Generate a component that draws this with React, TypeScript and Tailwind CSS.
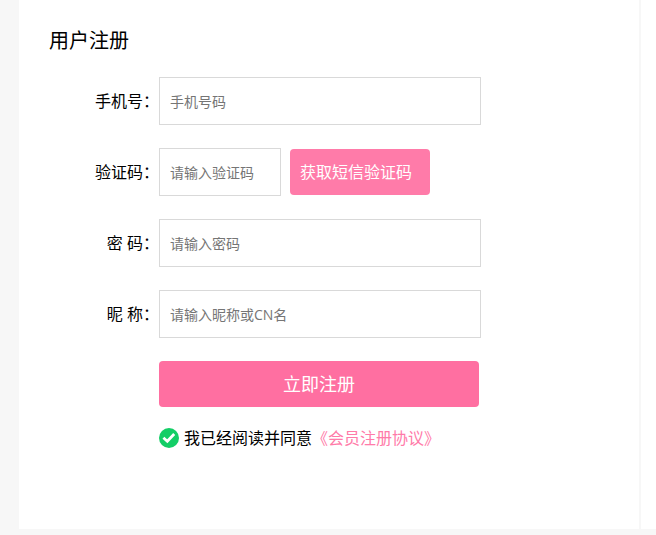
import { useState } from "react";

const labelClass = "w-[110px] shrink-0 text-right text-base";
const inputClass =
  "h-12 min-w-0 border border-[#d9d9d9] bg-white px-2.5 text-sm text-neutral-800 placeholder:text-[#757575] focus:border-[#ff6fa1] focus:outline-none";

export default function App() {
  const [agreed, setAgreed] = useState(true);

  return (
    <div className="flex min-h-screen gap-0.5 bg-[#f7f7f7] pb-1.5 pl-[19px] font-['Open_Sans','Noto_Sans_CJK_SC',sans-serif] text-black">
      <main className="min-w-0 flex-1 bg-white pt-6 pl-[30px]">
        <h1 className="text-xl leading-[34px]">用户注册</h1>

        <form
          className="mt-[19px] flex flex-col gap-[23px]"
          onSubmit={(e) => e.preventDefault()}
        >
          <div className="flex items-center">
            <label htmlFor="phone" className={labelClass}>
              手机号：
            </label>
            <input
              id="phone"
              type="tel"
              placeholder="手机号码"
              className={`${inputClass} w-[322px]`}
            />
          </div>

          <div className="flex items-center">
            <label htmlFor="code" className={labelClass}>
              验证码：
            </label>
            <input
              id="code"
              type="text"
              placeholder="请输入验证码"
              className={`${inputClass} w-[122px]`}
            />
            <button
              type="button"
              className="ml-[9px] h-[46px] w-[140px] rounded bg-[#ff7ba9] px-2.5 text-left text-base text-white"
            >
              获取短信验证码
            </button>
          </div>

          <div className="flex items-center">
            <label htmlFor="password" className={labelClass}>
              密 码：
            </label>
            <input
              id="password"
              type="password"
              placeholder="请输入密码"
              className={`${inputClass} w-[322px]`}
            />
          </div>

          <div className="flex items-center">
            <label htmlFor="nickname" className={labelClass}>
              昵 称：
            </label>
            <input
              id="nickname"
              type="text"
              placeholder="请输入昵称或CN名"
              className={`${inputClass} w-[322px]`}
            />
          </div>

          <div className="pl-[110px]">
            <button
              type="submit"
              className="h-[46px] w-[320px] rounded bg-[#ff6fa1] text-lg text-white"
            >
              立即注册
            </button>

            <div className="mt-[19px] flex items-center text-base">
              <span className="mr-[5px] grid size-5 shrink-0">
                <input
                  id="agree"
                  type="checkbox"
                  checked={agreed}
                  onChange={(e) => setAgreed(e.target.checked)}
                  className="col-start-1 row-start-1 size-5 appearance-none rounded-full bg-neutral-300 checked:bg-[#13ce66]"
                />
                <svg
                  viewBox="0 0 20 20"
                  className="pointer-events-none col-start-1 row-start-1 size-5"
                  fill="none"
                  stroke="white"
                  strokeWidth="2.8"
                  aria-hidden="true"
                >
                  <path d="M4.4 9.8 8.3 13.2 15.2 6" />
                </svg>
              </span>
              <label htmlFor="agree">我已经阅读并同意</label>
              <a href="#agreement" className="text-[#ff7ba9]">
                《会员注册协议》
              </a>
            </div>
          </div>
        </form>
      </main>

      <aside className="w-[15px] shrink-0 bg-white" />
    </div>
  );
}
